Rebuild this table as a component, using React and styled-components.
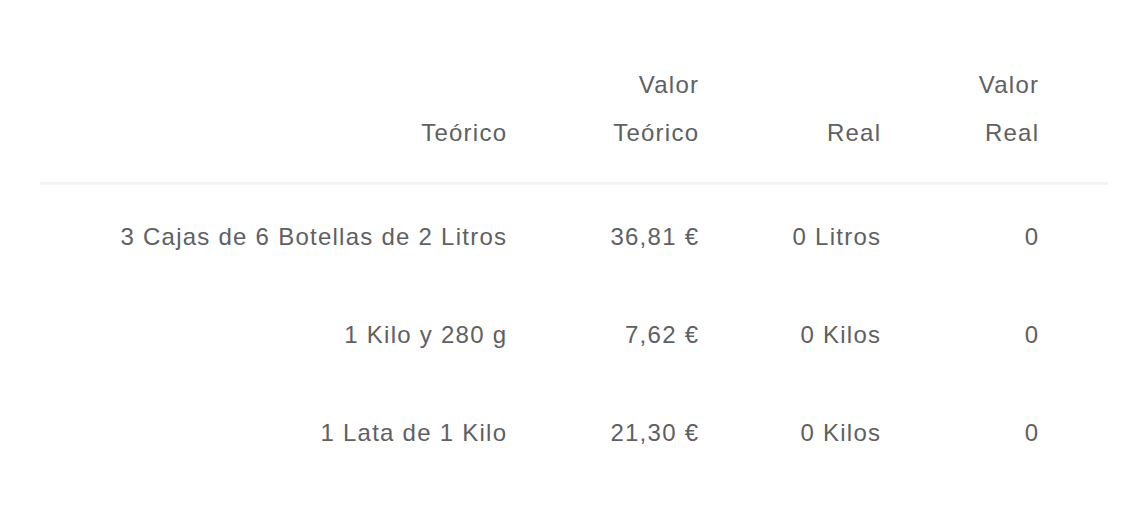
import React from "react";
import styled, { createGlobalStyle } from "styled-components";

const GlobalStyle = createGlobalStyle`
  html, body {
    margin: 0;
    padding: 0;
    background: #ffffff;
  }
  body {
    font-family: "Liberation Sans", Arial, Helvetica, sans-serif;
    color: #5e6064;
  }
`;

const Page = styled.div`
  width: 1147px;
  height: 523px;
  box-sizing: border-box;
  padding: 61px 39px 0 40px;
  background: #fff;
`;

const Table = styled.div`
  display: grid;
  grid-template-columns: 466px 192px 182px 158px 1fr;
`;

const HeadRow = styled.div`
  display: contents;
`;

const Text = styled.span`
  letter-spacing: 1.25px;
  margin-right: -1.25px;
`;

const HeadCell = styled.div`
  display: flex;
  flex-direction: column;
  justify-content: flex-end;
  align-items: flex-end;
  text-align: right;
  font-size: 24px;
  line-height: 48px;
  padding-bottom: 25px;
  border-bottom: 3px solid #f4f4f5;
  color: #5e6064;
`;

const BodyRow = styled.div`
  display: contents;
`;

const Cell = styled.div`
  height: 98px;
  display: flex;
  align-items: center;
  justify-content: flex-end;
  font-size: 24px;
  color: #5e6064;
  white-space: nowrap;
  padding-top: 5px;
  box-sizing: border-box;
`;

const headers = [["Teórico"], ["Valor", "Teórico"], ["Real"], ["Valor", "Real"], []];

const rows = [
  ["3 Cajas de 6 Botellas de 2 Litros", "36,81 €", "0 Litros", "0"],
  ["1 Kilo y 280 g", "7,62 €", "0 Kilos", "0"],
  ["1 Lata de 1 Kilo", "21,30 €", "0 Kilos", "0"],
];

export default function App() {
  return (
    <>
      <GlobalStyle />
      <Page>
        <Table>
          <HeadRow>
            {headers.map((lines, i) => (
              <HeadCell key={i}>
                {lines.map((l) => (
                  <Text key={l}>{l}</Text>
                ))}
              </HeadCell>
            ))}
          </HeadRow>
          {rows.map((r, ri) => (
            <BodyRow key={ri}>
              {r.map((c, ci) => (
                <Cell key={ci}>
                  <Text>{c}</Text>
                </Cell>
              ))}
              <Cell />
            </BodyRow>
          ))}
        </Table>
      </Page>
    </>
  );
}
